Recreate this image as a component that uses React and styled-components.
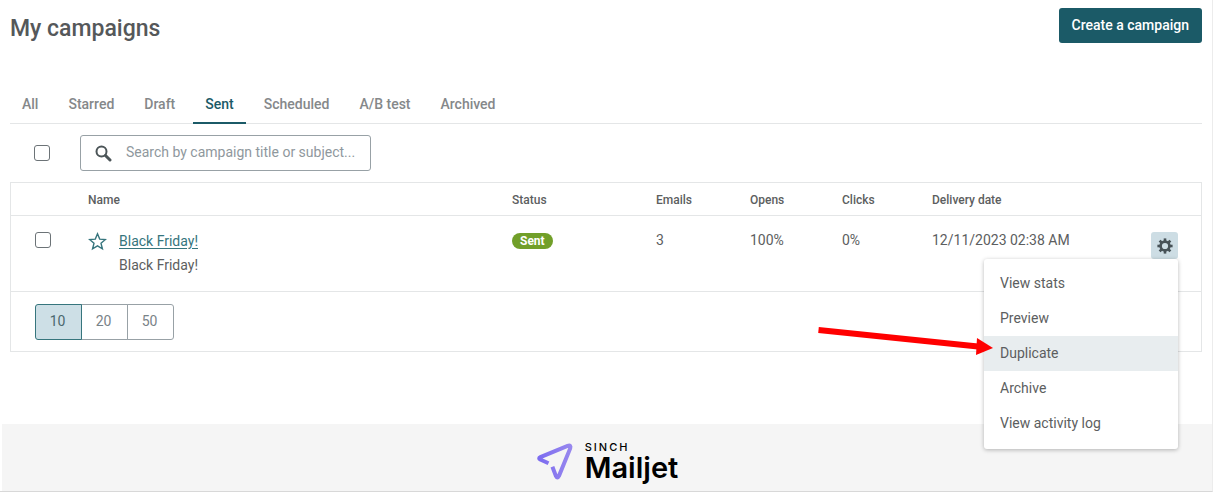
import { useState } from 'react';
import styled, { createGlobalStyle } from 'styled-components';

const GlobalStyle = createGlobalStyle`
    * {
        box-sizing: border-box;
    }

    body {
        margin: 0;
        background: #fff;
        color: #5c5e60;
        font-family: Roboto, "Liberation Sans", sans-serif;
        font-size: 14px;
        line-height: 24px;
    }

    button,
    input {
        font: inherit;
        color: inherit;
    }
`;

const Page = styled.div`
    border-right: 1px solid #ececec;
    border-bottom: 1px solid #d8d8d8;
`;

const Main = styled.main`
    padding: 8px 10px 72px;
`;

const Header = styled.header`
    display: flex;
    justify-content: space-between;
    align-items: center;
`;

const Title = styled.h1`
    margin: 6px 0 0;
    font-size: 23px;
    line-height: 28px;
    font-weight: 500;
    color: #55585a;
`;

const CreateButton = styled.button`
    height: 35px;
    padding: 0 13px 2px;
    border: 0;
    border-radius: 3px;
    background: #1b5a67;
    color: #fff;
    font-weight: 500;
    cursor: pointer;
`;

const Tabs = styled.nav`
    display: flex;
    gap: 6px;
    margin-top: 43px;
    border-bottom: 1px solid #e4e6e7;
`;

const Tab = styled.a`
    padding: 8px 12px;
    margin-bottom: -1px;
    border-bottom: 2px solid ${(props) => (props.$active ? '#1b5a67' : 'transparent')};
    color: ${(props) => (props.$active ? '#1b5a67' : '#85888a')};
    font-weight: 500;
    line-height: 20px;
    text-decoration: none;
`;

const Toolbar = styled.div`
    display: flex;
    align-items: center;
    gap: 30px;
    padding: 11px 24px;
`;

const Checkbox = styled.input.attrs({ type: 'checkbox' })`
    appearance: none;
    display: block;
    flex: none;
    width: 16px;
    height: 16px;
    margin: 0;
    border: 1px solid #6c7377;
    border-radius: 3px;
    background: #fff;

    &:checked {
        background: #1b5a67;
    }
`;

const SearchBox = styled.label`
    display: flex;
    align-items: center;
    gap: 14px;
    width: 291px;
    height: 36px;
    padding: 0 14px;
    border: 1px solid #98a1a6;
    border-radius: 3px;
`;

const SearchInput = styled.input.attrs({ type: 'text' })`
    flex: 1;
    min-width: 0;
    padding: 0 0 2px;
    border: 0;
    outline: 0;
    background: none;

    &::placeholder {
        color: #8f989d;
        opacity: 1;
    }
`;

const Panel = styled.section`
    border: 1px solid #e4e6e7;
`;

const Table = styled.table`
    width: 100%;
    table-layout: fixed;
    border-spacing: 0;
`;

const Col = styled.col`
    width: ${(props) => props.$width};
`;

const Th = styled.th`
    height: 33px;
    padding: 2px 0 0 24px;
    border-bottom: 1px solid #e4e6e7;
    font-size: 12px;
    font-weight: 500;
    line-height: 20px;
    text-align: left;
`;

const Td = styled.td`
    height: 76px;
    padding: ${(props) => (props.$control ? '16px' : '12px')} 0 0 24px;
    border-bottom: 1px solid #e4e6e7;
    vertical-align: top;
`;

const Campaign = styled.div`
    display: flex;
    gap: 12px;
    padding-top: 1px;
`;

const StarButton = styled.button`
    display: flex;
    align-items: center;
    height: 24px;
    padding: 0;
    border: 0;
    background: none;
    color: #36757d;
`;

const CampaignLink = styled.a`
    display: block;
    color: #36757d;
    text-decoration: underline;
    text-underline-offset: 2px;
`;

const Badge = styled.span`
    display: inline-block;
    padding: 0 8px;
    border-radius: 8px;
    background: #719f29;
    color: #fff;
    font-size: 12px;
    font-weight: 700;
    line-height: 16px;
`;

const Actions = styled.div`
    position: relative;
    width: 27px;
`;

const GearButton = styled.button`
    display: flex;
    align-items: center;
    justify-content: center;
    width: 27px;
    height: 27px;
    padding: 0;
    border: 0;
    border-radius: 3px;
    background: #cddde4;
    color: #475257;
`;

const Menu = styled.ul`
    position: absolute;
    top: 100%;
    right: 0;
    z-index: 1;
    width: 194px;
    margin: 0;
    padding: 7px 0 8px;
    border-radius: 3px;
    background: #fff;
    box-shadow: 0 1px 4px rgba(0, 0, 0, 0.28);
    list-style: none;
`;

const MenuItem = styled.li`
    position: relative;
`;

const MenuButton = styled.button`
    display: block;
    width: 100%;
    height: 35px;
    padding: 0 16px 2px;
    border: 0;
    background: ${(props) => (props.$active ? '#e8edef' : 'none')};
    text-align: left;
`;

const Arrow = styled.svg`
    position: absolute;
    right: 185px;
    bottom: 15px;
    pointer-events: none;
`;

const Pager = styled.div`
    display: flex;
    padding: 12px 24px 11px;
`;

const PageSize = styled.button`
    width: 47px;
    height: 36px;
    padding: 0 2px 2px 0;
    border: 1px solid ${(props) => (props.$active ? '#36757d' : '#98a1a6')};
    background: ${(props) => (props.$active ? '#cddfe6' : '#fff')};
    color: ${(props) => (props.$active ? '#4b686e' : '#7a8388')};
    position: relative;
    z-index: ${(props) => (props.$active ? 1 : 0)};

    & + & {
        margin-left: -1px;
    }

    &:first-child {
        border-radius: 3px 0 0 3px;
    }

    &:last-child {
        border-radius: 0 3px 3px 0;
    }
`;

const Footer = styled.footer`
    display: flex;
    justify-content: center;
    gap: 11px;
    height: 67px;
    margin-left: 2px;
    padding-top: 17px;
    background: #f5f5f5;
    color: #000;
`;

const Brand = styled.div`
    font-family: Inter, sans-serif;
`;

const BrandTop = styled.div`
    font-size: 11px;
    font-weight: 500;
    line-height: 12px;
    letter-spacing: 2px;
`;

const BrandName = styled.div`
    font-size: 29px;
    font-weight: 600;
    line-height: 30px;
`;

const SearchIcon = () => (
    <svg width="17" height="17" viewBox="0 0 17 17" fill="none" stroke="#4c5558">
        <circle cx="6.5" cy="6.5" r="5" strokeWidth="2" />
        <path d="M10.5 10.5L15 15" strokeWidth="3" strokeLinecap="round" />
    </svg>
);

const StarIcon = () => (
    <svg width="19" height="19" viewBox="0 0 19 19" fill="none" stroke="currentColor" strokeWidth="1.4">
        <path d="M9.5 1.8L11.7 7.1L17.4 7.5L13 11.2L14.4 16.8L9.5 13.8L4.6 16.8L6 11.2L1.6 7.5L7.3 7.1Z" />
    </svg>
);

const GearIcon = () => (
    <svg width="16" height="16" viewBox="0 0 16 16" fill="none" stroke="currentColor">
        <circle cx="8" cy="8" r="4.4" strokeWidth="2.6" />
        {[0, 45, 90, 135, 180, 225, 270, 315].map((deg) => (
            <path key={deg} d="M8 0.4V3" strokeWidth="2.6" transform={`rotate(${deg} 8 8)`} />
        ))}
    </svg>
);

const PlaneIcon = () => (
    <svg width="38" height="40" viewBox="0 0 38 40" fill="none">
        <defs>
            <linearGradient id="plane" x1="0" y1="0" x2="1" y2="0">
                <stop offset="0" stopColor="#7c6cf0" />
                <stop offset="1" stopColor="#9787ee" />
            </linearGradient>
        </defs>
        <path
            d="M12.5 22.2L4.3 18.5Q2 17.2 4.4 16.1L31.6 4.8Q35.4 3.6 34.2 7.4L23 34.8Q21.4 38 19.8 34.8L16.4 25.8"
            stroke="url(#plane)"
            strokeWidth="4"
        />
    </svg>
);

const tabs = ['All', 'Starred', 'Draft', 'Sent', 'Scheduled', 'A/B test', 'Archived'];
const menuItems = ['View stats', 'Preview', 'Duplicate', 'Archive', 'View activity log'];
const pageSizes = [10, 20, 50];

function App() {
    const [tab, setTab] = useState('Sent');
    const [pageSize, setPageSize] = useState(10);
    const [search, setSearch] = useState('');

    return (
        <Page>
            <GlobalStyle />
            <Main>
                <Header>
                    <Title>My campaigns</Title>
                    <CreateButton type="button">Create a campaign</CreateButton>
                </Header>

                <Tabs>
                    {tabs.map((name) => (
                        <Tab key={name} href="#" $active={tab === name} onClick={() => setTab(name)}>
                            {name}
                        </Tab>
                    ))}
                </Tabs>

                <Toolbar>
                    <Checkbox aria-label="Select all campaigns" />
                    <SearchBox>
                        <SearchIcon />
                        <SearchInput
                            aria-label="Search"
                            placeholder="Search by campaign title or subject..."
                            value={search}
                            onChange={(e) => setSearch(e.target.value)}
                        />
                    </SearchBox>
                </Toolbar>

                <Panel>
                    <Table>
                        <colgroup>
                            <Col $width="53px" />
                            <Col />
                            <Col $width="144px" />
                            <Col $width="94px" />
                            <Col $width="92px" />
                            <Col $width="90px" />
                            <Col $width="219px" />
                            <Col $width="74px" />
                        </colgroup>
                        <thead>
                            <tr>
                                <Th />
                                <Th>Name</Th>
                                <Th>Status</Th>
                                <Th>Emails</Th>
                                <Th>Opens</Th>
                                <Th>Clicks</Th>
                                <Th>Delivery date</Th>
                                <Th />
                            </tr>
                        </thead>
                        <tbody>
                            <tr>
                                <Td $control>
                                    <Checkbox aria-label="Select Black Friday!" />
                                </Td>
                                <Td>
                                    <Campaign>
                                        <StarButton type="button" aria-label="Star campaign">
                                            <StarIcon />
                                        </StarButton>
                                        <div>
                                            <CampaignLink href="#">Black Friday!</CampaignLink>
                                            <div>Black Friday!</div>
                                        </div>
                                    </Campaign>
                                </Td>
                                <Td>
                                    <Badge>Sent</Badge>
                                </Td>
                                <Td>3</Td>
                                <Td>100%</Td>
                                <Td>0%</Td>
                                <Td>12/11/2023 02:38 AM</Td>
                                <Td $control>
                                    <Actions>
                                        <GearButton type="button" aria-label="Campaign actions">
                                            <GearIcon />
                                        </GearButton>
                                        <Menu>
                                            {menuItems.map((item) => (
                                                <MenuItem key={item}>
                                                    <MenuButton type="button" $active={item === 'Duplicate'}>
                                                        {item}
                                                    </MenuButton>
                                                    {item === 'Duplicate' && (
                                                        <Arrow width="175" height="34" viewBox="0 0 175 34">
                                                            <path d="M0.5 8L160 24.5" stroke="#f00" strokeWidth="6" />
                                                            <path d="M159 16L175 26L158 33Z" fill="#f00" />
                                                        </Arrow>
                                                    )}
                                                </MenuItem>
                                            ))}
                                        </Menu>
                                    </Actions>
                                </Td>
                            </tr>
                        </tbody>
                    </Table>
                    <Pager>
                        {pageSizes.map((size) => (
                            <PageSize
                                key={size}
                                type="button"
                                $active={pageSize === size}
                                onClick={() => setPageSize(size)}
                            >
                                {size}
                            </PageSize>
                        ))}
                    </Pager>
                </Panel>
            </Main>

            <Footer>
                <PlaneIcon />
                <Brand>
                    <BrandTop>SINCH</BrandTop>
                    <BrandName>Mailjet</BrandName>
                </Brand>
            </Footer>
        </Page>
    );
}

export default App;
